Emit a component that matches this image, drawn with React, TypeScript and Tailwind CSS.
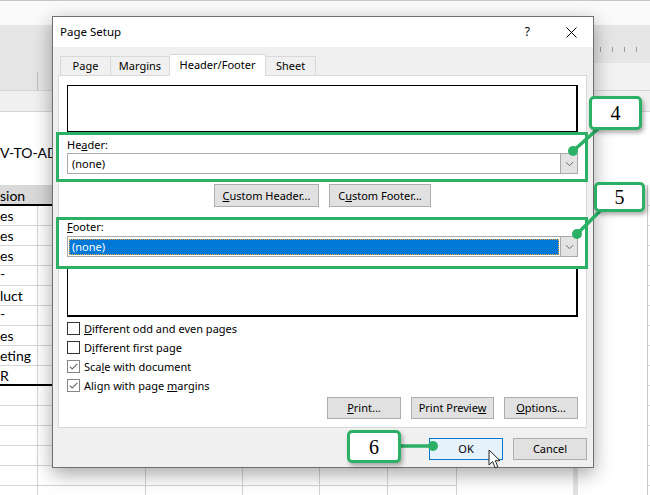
import React from 'react';

const gridCols = ['w-[38px]', 'w-[108px]', 'w-[97px]', 'w-[77px]', 'w-[68px]', 'w-[69px]'];

const cellRows = [
  { text: 'es' },
  { text: 'es' },
  { text: 'es' },
  { text: '-', high: true },
  { text: 'luct' },
  { text: '-', high: true },
  { text: 'es' },
  { text: 'eting' },
  { text: 'R' },
];

const RightEdge = () => (
  <>
    <div className="w-[116px]" />
    <div className="w-[5px] bg-[#e2e2e2]" />
    <div className="w-[70px] border-r border-[#c8c8c8]" />
    <div className="flex-1 border-b border-[#d4d4d4]" />
  </>
);

const GridRow = ({ text, high, last }: { text?: string; high?: boolean; last?: boolean }) => (
  <div className="flex h-[20px]">
    <div className={`flex w-[457px] ${last ? 'border-b-2 border-black' : 'border-b border-[#d4d4d4]'}`}>
      {gridCols.map((c, i) => (
        <div key={i} className={`${c} border-r border-[#d4d4d4]`}>
          {i === 0 && text && (
            <span className={`block whitespace-nowrap ${high ? 'leading-[15px]' : 'leading-[19px]'}`}>{text}</span>
          )}
        </div>
      ))}
    </div>
    <RightEdge />
  </div>
);

const Sheet = () => (
  <div className="flex flex-col font-['Lato',sans-serif] text-[14px] text-black">
    <div className="h-[25px] border-t border-[#c6c6c6] bg-[#fafafa]" />
    <div className="flex h-[38px] bg-[#e6e6e6]">
      <div className="w-[600px]" />
      <div className="mt-[22px] flex h-[5px] gap-[11px]">
        {[0, 1, 2, 3].map((i) => (
          <div key={i} className="h-[5px] w-px bg-[#9a9a9a]" />
        ))}
      </div>
    </div>
    <div className="flex h-[27px]">
      <div className="flex w-[52px] bg-[#e6e6e6]">
        <div className="w-[37px]" />
        <div className="mt-[9px] w-px bg-[#bdbdbd]" />
      </div>
      <div className="flex-1 bg-[#f2f2f2]" />
    </div>
    <div className="h-[22px] border-y border-[#d6d6d6] bg-[#f0f0f0]" />
    <div className="flex h-[73px] items-end pb-[22px]">
      <span className="whitespace-nowrap leading-[20px]">V-TO-ADD</span>
    </div>
    <div className="flex h-[21px]">
      <div className="w-[457px] border-b-2 border-black bg-[#d9d9d9]">
        <span className="leading-[19px]">sion</span>
      </div>
      <RightEdge />
    </div>
    {cellRows.map((r, i) => (
      <GridRow key={i} text={r.text} high={r.high} last={i === cellRows.length - 1} />
    ))}
    {[0, 1, 2, 3, 4, 5].map((i) => (
      <GridRow key={`f${i}`} />
    ))}
  </div>
);

const Chevron = () => (
  <svg width="9" height="6" viewBox="0 0 9 6">
    <path d="M1 1.2L4.5 4.7L8 1.2" fill="none" stroke="#6b6b6b" strokeWidth="1" />
  </svg>
);

const Combo = ({ selected }: { selected?: boolean }) => (
  <div className="flex h-[21px] border border-[#a9a9a9] bg-white">
    <div className="flex flex-1 items-center pl-px pr-px">
      {selected ? (
        <div className="flex h-[16px] w-full items-center border border-dotted border-[#f3a53a] bg-[#0078d7] pl-[2px] text-white">
          (none)
        </div>
      ) : (
        <span className="pl-[3px]">(none)</span>
      )}
    </div>
    <div className="flex w-[17px] items-center justify-center border-l border-[#a9a9a9] bg-[#e3e3e3]">
      <Chevron />
    </div>
  </div>
);

const Btn = ({ className, children, primary }: { className: string; children: React.ReactNode; primary?: boolean }) => (
  <div
    className={`flex items-center justify-center border ${
      primary ? 'border-[#0078d7] bg-[#e5f1fb]' : 'border-[#adadad] bg-[#e1e1e1]'
    } ${className}`}
  >
    {children}
  </div>
);

const Check = ({ checked, children }: { checked?: boolean; children: React.ReactNode }) => (
  <div className="flex h-[19px] items-center gap-[4px]">
    <div
      className={`flex h-[13px] w-[13px] items-center justify-center border bg-white ${
        checked ? 'border-[#858585]' : 'border-[#333333]'
      }`}
    >
      {checked && (
        <svg width="11" height="11" viewBox="0 0 11 11">
          <path d="M1.8 5.6L4.2 8L9.4 2.8" fill="none" stroke="#6a6a6a" strokeWidth="1.1" />
        </svg>
      )}
    </div>
    <span>{children}</span>
  </div>
);

const GreenFrame = ({ className }: { className: string }) => (
  <div className={`pointer-events-none absolute border-[3px] border-[#2bb066] ${className}`} />
);

const Dialog = () => (
  <div className="absolute left-[52px] top-[16px] flex h-[452px] w-[542px] flex-col border border-[#707070] bg-[#f0f0f0] font-['Noto_Sans',sans-serif] text-[11px] leading-[16px] text-black shadow-[0_6px_18px_rgba(0,0,0,0.35)]">
    {/* title bar */}
    <div className="flex h-[30px] items-center bg-white pl-[7px]">
      <span className="text-[11.5px]">Page Setup</span>
      <span className="ml-auto text-[12px]">?</span>
      <svg className="ml-[36px] mr-[16px]" width="11" height="11" viewBox="0 0 11 11">
        <path d="M0.5 0.5L10.5 10.5M10.5 0.5L0.5 10.5" stroke="#000" strokeWidth="1" />
      </svg>
    </div>

    {/* tabs */}
    <div className="flex h-[28px] items-end pl-[7px]">
      <div className="flex h-[19px] w-[51px] items-center justify-center border border-b-0 border-[#d9d9d9]">Page</div>
      <div className="flex h-[19px] w-[59px] items-center justify-center border border-b-0 border-l-0 border-[#d9d9d9]">Margins</div>
      <div className="relative z-10 -mb-px flex h-[22px] w-[96px] items-start justify-center border border-b-0 border-l-0 border-[#d9d9d9] bg-white pt-[2px]">
        Header/Footer
      </div>
      <div className="flex h-[19px] w-[50px] items-center justify-center border border-b-0 border-l-0 border-[#d9d9d9]">Sheet</div>
    </div>

    {/* panel */}
    <div className="ml-[5px] mr-[6px] flex h-[353px] flex-col border border-[#d9d9d9] bg-white pl-[8px] pr-[8px] pt-[9px]">
      <div className="h-[48px] border-b-2 border-l border-r-2 border-t border-black" />

      <div className="relative mt-[4px]">
        <div className="h-[16px]">
          He<u>a</u>der:
        </div>
        <Combo />
        <GreenFrame className="-bottom-[8px] -left-[11px] -right-[10px] -top-[5px]" />
      </div>

      <div className="mt-[10px] flex h-[23px] justify-center gap-[10px]">
        <Btn className="w-[105px]">
          <span>
            <u>C</u>ustom Header...
          </span>
        </Btn>
        <Btn className="w-[102px]">
          <span>
            C<u>u</u>stom Footer...
          </span>
        </Btn>
      </div>

      <div className="relative mt-[12px]">
        <div className="h-[17px]">
          <u>F</u>ooter:
        </div>
        <Combo selected />
        <GreenFrame className="-bottom-[12px] -left-[11px] -right-[10px] -top-[2px]" />
      </div>

      <div className="mt-[9px] h-[51px] border-b-2 border-l border-r-2 border-black" />

      <div className="mt-[2px] flex flex-col">
        <Check>
          <u>D</u>ifferent odd and even pages
        </Check>
        <Check>
          D<u>i</u>fferent first page
        </Check>
        <Check checked>
          Sca<u>l</u>e with document
        </Check>
        <Check checked>
          Align with page <u>m</u>argins
        </Check>
      </div>

      <div className="mt-[2px] flex h-[22px] justify-end gap-[10px]">
        <Btn className="w-[74px]">
          <span>
            <u>P</u>rint...
          </span>
        </Btn>
        <Btn className="w-[83px]">
          <span>
            Print Previe<u>w</u>
          </span>
        </Btn>
        <Btn className="w-[74px]">
          <span>
            <u>O</u>ptions...
          </span>
        </Btn>
      </div>
    </div>

    {/* footer buttons */}
    <div className="flex justify-end gap-[10px] pr-[6px] pt-[10px]">
      <Btn primary className="h-[22px] w-[74px]">
        OK
      </Btn>
      <Btn className="h-[22px] w-[74px]">Cancel</Btn>
    </div>
  </div>
);

const Callout = ({ className, n }: { className: string; n: string }) => (
  <div
    className={`absolute flex items-center justify-center rounded-[5px] border-[3px] border-[#2bb066] bg-white font-['Liberation_Serif',serif] text-[20px] leading-none text-black shadow-[2px_3px_4px_rgba(0,0,0,0.3)] ${className}`}
  >
    {n}
  </div>
);

const App = () => {
  return (
    <div className="relative h-[495px] w-[650px] overflow-hidden bg-white">
      <Sheet />
      <Dialog />

      <svg className="pointer-events-none absolute left-0 top-0" width="650" height="495" viewBox="0 0 650 495">
        <g stroke="#2bb066" strokeWidth="3.5" fill="#2bb066" strokeLinecap="round">
          <line x1="573" y1="151" x2="600" y2="127" />
          <circle cx="573" cy="151" r="5" stroke="none" />
          <line x1="577" y1="234" x2="602" y2="209" />
          <circle cx="577" cy="234" r="5" stroke="none" />
          <line x1="400" y1="446" x2="433" y2="446" />
          <circle cx="433" cy="446" r="5" stroke="none" />
        </g>
      </svg>

      <Callout className="left-[589px] top-[96px] h-[34px] w-[53px]" n="4" />
      <Callout className="left-[594px] top-[182px] h-[30px] w-[51px]" n="5" />
      <Callout className="left-[347px] top-[430px] h-[33px] w-[54px]" n="6" />

      <svg className="pointer-events-none absolute left-[488px] top-[449px]" width="14" height="22" viewBox="0 0 14 22">
        <path d="M1 1L1 16L4.6 12.6L7.2 18.8L9.8 17.7L7.3 11.7L12 11.7Z" fill="#ffffff" stroke="#222" strokeWidth="1" strokeLinejoin="round" />
      </svg>
    </div>
  );
};

export default App;
